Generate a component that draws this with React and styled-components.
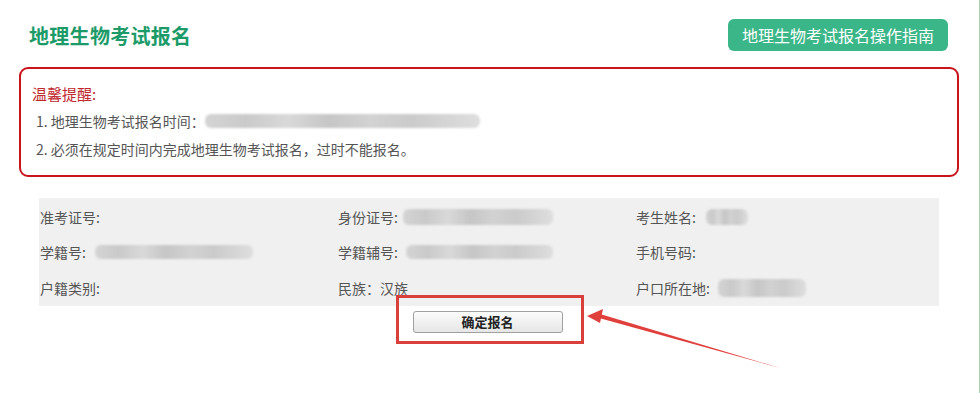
import React from "react";
import styled, { createGlobalStyle } from "styled-components";

const GlobalStyle = createGlobalStyle`
  html, body {
    margin: 0;
    padding: 0;
    background: #fff;
  }
  body {
    font-family: "Noto Sans CJK SC", "Noto Sans", sans-serif;
  }
`;

const Page = styled.div`
  position: relative;
  width: 979px;
  height: 393px;
  border-right: 1px solid #a9d2ad;
  overflow: hidden;
`;

const Header = styled.div`
  display: flex;
  justify-content: space-between;
  align-items: center;
  padding: 18px 31px 0 29px;
  height: 34px;
`;

const Title = styled.h1`
  margin: 0;
  font-size: 20px;
  font-weight: 700;
  color: #1c9b69;
  letter-spacing: 0.3px;
`;

const GuideButton = styled.button`
  height: 32px;
  padding: 0 14px;
  border: none;
  border-radius: 6px;
  background: #3bb688;
  color: #fff;
  font-family: inherit;
  font-size: 16px;
  line-height: 32px;
`;

const Notice = styled.div`
  margin: 15px 0 0 19px;
  width: 940px;
  height: 110px;
  border: 2px solid #c9141c;
  border-radius: 9px;
  padding: 15px 0 0 11px;
  box-sizing: border-box;
`;

const NoticeTitle = styled.div`
  font-size: 15px;
  line-height: 20px;
  color: #c0282d;
`;

const NoticeLine = styled.div`
  display: flex;
  align-items: center;
  margin-top: ${(p) => p.$gap}px;
  padding-left: 4px;
  font-size: 14px;
  line-height: 18px;
  color: #555;
`;

const Blur = styled.span`
  display: inline-block;
  width: ${(p) => p.$w}px;
  height: ${(p) => p.$h || 14}px;
  margin-left: ${(p) => p.$ml || 0}px;
  border-radius: 6px;
  background: linear-gradient(
    90deg,
    #d4d4d4 0%,
    #cacaca 15%,
    #d9d9d9 30%,
    #c6c6c6 45%,
    #d2d2d2 60%,
    #cbcbcb 75%,
    #dedede 100%
  );
  filter: blur(1px);
`;

const InfoPanel = styled.div`
  margin: 21px 0 0 39px;
  width: 900px;
  height: 108px;
  background: #f0f0f0;
  display: grid;
  grid-template-columns: 298px 298px 1fr;
  grid-template-rows: repeat(3, 1fr);
  padding: 0 0 0 1px;
  box-sizing: border-box;
`;

const Field = styled.div`
  display: flex;
  align-items: center;
  font-size: 14px;
  color: #555;
  padding-top: ${(p) => p.$pt || 0}px;
`;

const Actions = styled.div`
  display: flex;
  justify-content: center;
  margin-top: 1px;
`;

const Highlight = styled.div`
  padding: 10px 18px 8px 14px;
  margin-top: -12px;
  border: 3px solid #d9403c;
`;

const SubmitButton = styled.button`
  width: 150px;
  height: 22px;
  border: 1px solid #a0a0a0;
  border-radius: 3px;
  background: linear-gradient(#fcfcfc, #e6e6e6);
  font-family: inherit;
  font-size: 13px;
  font-weight: 700;
  color: #222;
  padding: 0;
`;

const Arrow = styled.svg`
  position: absolute;
  left: 0;
  top: 0;
  pointer-events: none;
`;

export default function App() {
  return (
    <>
      <GlobalStyle />
      <Page>
        <Header>
          <Title>地理生物考试报名</Title>
          <GuideButton>地理生物考试报名操作指南</GuideButton>
        </Header>

        <Notice>
          <NoticeTitle>温馨提醒:</NoticeTitle>
          <NoticeLine $gap={8}>
            1. 地理生物考试报名时间：
            <Blur $w={275} />
          </NoticeLine>
          <NoticeLine $gap={10}>
            2. 必须在规定时间内完成地理生物考试报名，过时不能报名。
          </NoticeLine>
        </Notice>

        <InfoPanel>
          <Field $pt={2}>准考证号:</Field>
          <Field $pt={2}>
            身份证号:
            <Blur $w={150} $h={16} $ml={5} />
          </Field>
          <Field $pt={2}>
            考生姓名:
            <Blur $w={42} $h={16} $ml={10} />
          </Field>
          <Field>
            学籍号:
            <Blur $w={158} $h={14} $ml={9} />
          </Field>
          <Field>
            学籍辅号:
            <Blur $w={147} $h={14} $ml={8} />
          </Field>
          <Field>手机号码:</Field>
          <Field>户籍类别:</Field>
          <Field>民族：汉族</Field>
          <Field>
            户口所在地:
            <Blur $w={88} $h={18} $ml={8} />
          </Field>
        </InfoPanel>

        <Actions>
          <Highlight>
            <SubmitButton>确定报名</SubmitButton>
          </Highlight>
        </Actions>

        <Arrow width="980" height="393" viewBox="0 0 980 393">
          <polygon points="780,368 600,314 599,318" fill="#e0403c" />
          <polygon points="587,316 603,309 600,323" fill="#e0403c" />
        </Arrow>
      </Page>
    </>
  );
}
